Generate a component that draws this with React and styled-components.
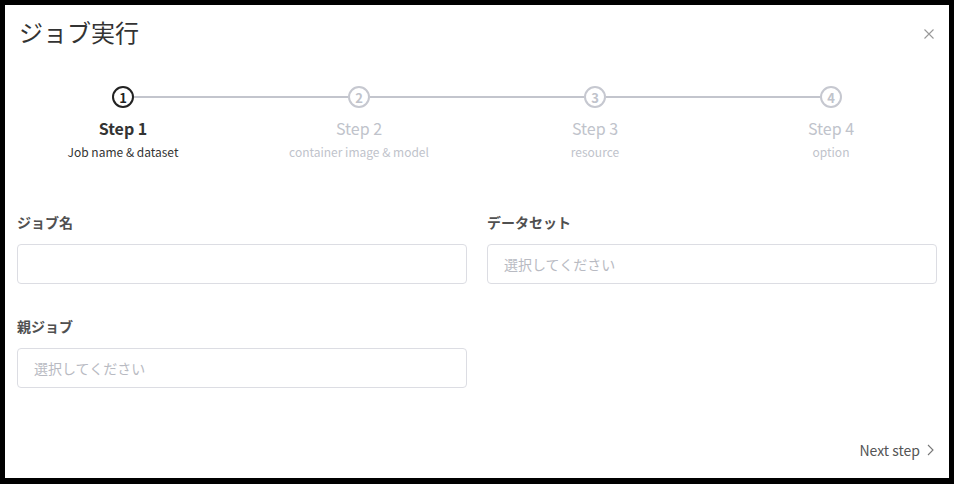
import React from "react";
import styled, { createGlobalStyle } from "styled-components";

const Global = createGlobalStyle`
  html, body { margin: 0; padding: 0; background: #000; }
  body { font-family: "Noto Sans CJK JP", "Noto Sans", sans-serif; }
  * { box-sizing: border-box; }
`;

const Modal = styled.div`
  margin: 5px;
  width: 944px;
  height: 473px;
  background: #fff;
  display: flex;
  flex-direction: column;
`;

const Header = styled.div`
  height: 60px;
  display: flex;
  align-items: center;
  justify-content: space-between;
  padding: 0 15px 6px 14px;
`;

const Title = styled.h1`
  margin: 0;
  font-size: 24px;
  font-weight: 400;
  line-height: 30px;
  color: #333;
`;

const CloseButton = styled.button`
  border: 0;
  background: none;
  padding: 0;
  margin-top: 4px;
  width: 10px;
  height: 10px;
  display: flex;
  cursor: pointer;
`;

const Stepper = styled.div`
  display: grid;
  grid-template-columns: repeat(4, 1fr);
  padding-top: 21px;
`;

const Step = styled.div`
  display: flex;
  flex-direction: column;
  align-items: center;
`;

const Track = styled.div`
  width: 100%;
  display: flex;
  align-items: center;
`;

const Line = styled.div`
  flex: 1;
  height: 2px;
  background: ${(p) => (p.$hidden ? "transparent" : "#c3c5cd")};
`;

const Circle = styled.div`
  width: 22px;
  height: 22px;
  border-radius: 50%;
  border: 2px solid ${(p) => (p.$active ? "#222" : "#c6c8d0")};
  color: ${(p) => (p.$active ? "#222" : "#c0c3cb")};
  font-size: 13px;
  font-weight: 700;
  display: flex;
  align-items: center;
  justify-content: center;
  line-height: 1;
`;

const StepTitle = styled.div`
  margin-top: 9px;
  font-size: 16px;
  line-height: 22px;
  font-weight: ${(p) => (p.$active ? 700 : 400)};
  color: ${(p) => (p.$active ? "#333" : "#c0c3cb")};
`;

const StepSub = styled.div`
  margin-top: 4px;
  font-size: 12px;
  line-height: 18px;
  color: ${(p) => (p.$active ? "#333" : "#c0c3cb")};
`;

const Form = styled.div`
  display: grid;
  grid-template-columns: 450px 450px;
  column-gap: 20px;
  row-gap: 32px;
  padding: 0 13px 0 12px;
  margin-top: 51px;
`;

const Field = styled.div`
  display: flex;
  flex-direction: column;
  gap: 12px;
`;

const Label = styled.label`
  font-size: 14px;
  line-height: 20px;
  font-weight: 700;
  color: #505050;
`;

const Input = styled.div`
  height: 40px;
  border: 1px solid #dcdde3;
  border-radius: 4px;
  padding: 0 16px;
  display: flex;
  align-items: center;
  font-size: 14px;
  color: #b8bac2;
`;

const Footer = styled.div`
  margin-top: auto;
  padding: 0 15px 18px 0;
  display: flex;
  justify-content: flex-end;
`;

const NextButton = styled.button`
  border: 0;
  background: none;
  padding: 0;
  font-family: inherit;
  font-size: 14px;
  line-height: 20px;
  color: #555;
  display: flex;
  align-items: center;
  gap: 7px;
  cursor: pointer;
`;

const steps = [
  { n: 1, title: "Step 1", sub: "Job name & dataset" },
  { n: 2, title: "Step 2", sub: "container image & model" },
  { n: 3, title: "Step 3", sub: "resource" },
  { n: 4, title: "Step 4", sub: "option" },
];

export default function App() {
  return (
    <>
      <Global />
      <Modal>
        <Header>
          <Title>ジョブ実行</Title>
          <CloseButton aria-label="close">
            <svg width="10" height="10" viewBox="0 0 10 10">
              <path d="M0.5 0.5L9.5 9.5M9.5 0.5L0.5 9.5" stroke="#999" strokeWidth="1.1" />
            </svg>
          </CloseButton>
        </Header>
        <Stepper>
          {steps.map((s, i) => (
            <Step key={s.n}>
              <Track>
                <Line $hidden={i === 0} />
                <Circle $active={i === 0}>{s.n}</Circle>
                <Line $hidden={i === steps.length - 1} />
              </Track>
              <StepTitle $active={i === 0}>{s.title}</StepTitle>
              <StepSub $active={i === 0}>{s.sub}</StepSub>
            </Step>
          ))}
        </Stepper>
        <Form>
          <Field>
            <Label>ジョブ名</Label>
            <Input />
          </Field>
          <Field>
            <Label>データセット</Label>
            <Input>選択してください</Input>
          </Field>
          <Field>
            <Label>親ジョブ</Label>
            <Input>選択してください</Input>
          </Field>
        </Form>
        <Footer>
          <NextButton>
            Next step
            <svg width="7" height="12" viewBox="0 0 7 12">
              <path d="M1 1L6 6L1 11" fill="none" stroke="#777" strokeWidth="1.1" />
            </svg>
          </NextButton>
        </Footer>
      </Modal>
    </>
  );
}
